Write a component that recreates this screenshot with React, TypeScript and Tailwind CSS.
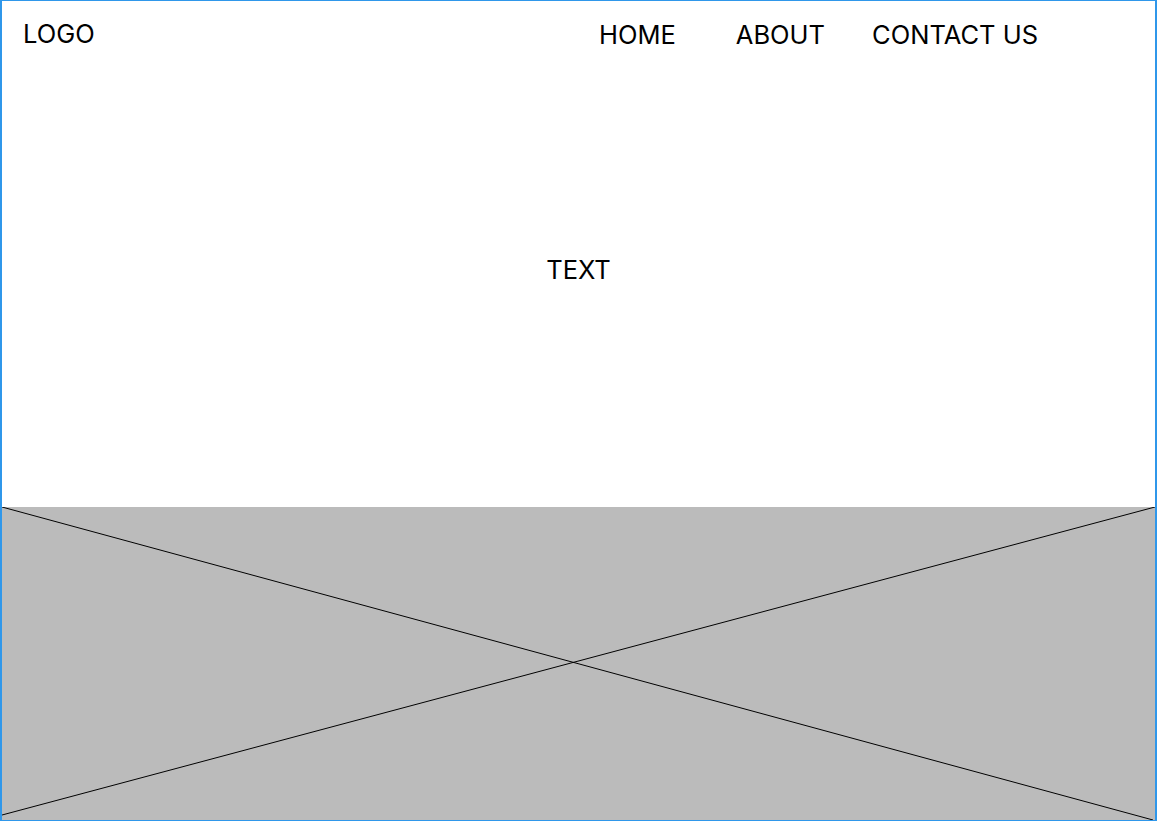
export default function App() {
  return (
    <div
      className="h-[821px] w-[1157px] border-x-2 border-y border-[#2f97ea] bg-white flex flex-col text-black"
      style={{ fontFamily: "Inter, 'Liberation Sans', sans-serif" }}
    >
      <div className="h-[506px] flex flex-col">
        <header className="flex items-start justify-between pl-[21px] pr-[117px]">
          <div className="mt-[18px] text-[25.5px] leading-[30px]">LOGO</div>
          <nav className="mt-[19px] flex text-[25.5px] leading-[30px]">
            <a>HOME</a>
            <a className="ml-[60px]">ABOUT</a>
            <a className="ml-[47px]">CONTACT US</a>
          </nav>
        </header>
        <div className="mt-[205px] text-center text-[25.5px] leading-[30px]">TEXT</div>
      </div>
      <div className="relative flex-1 bg-[#bbbbbb]">
        <svg
          className="absolute inset-0 h-full w-full"
          viewBox="0 0 1153 313"
          preserveAspectRatio="none"
        >
          <line x1="0" y1="0" x2="1151" y2="313" stroke="#000" strokeWidth="1" />
          <line x1="0" y1="308" x2="1153" y2="0" stroke="#000" strokeWidth="1" />
        </svg>
      </div>
    </div>
  );
}
